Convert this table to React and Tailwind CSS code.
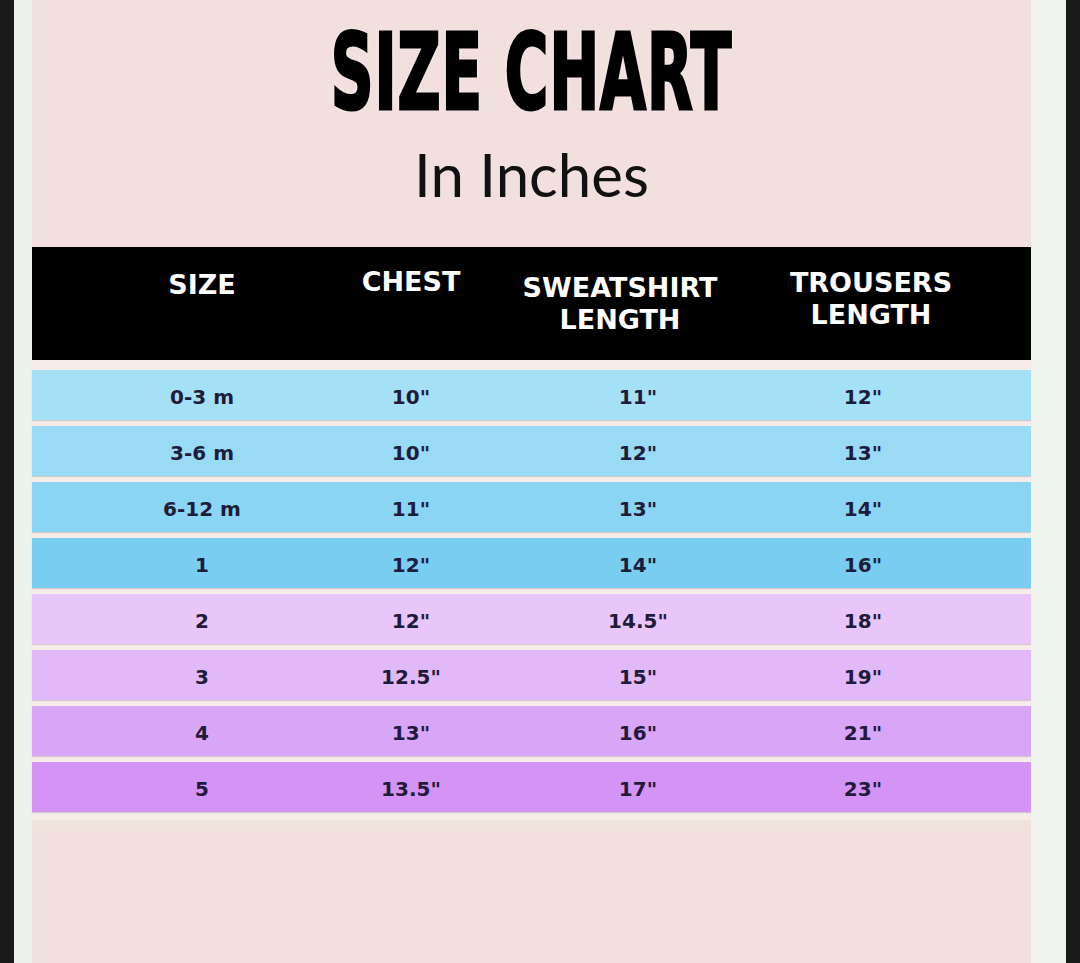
import React from 'react';

const rows = [
  { size: '0-3 m', chest: '10"', shirt: '11"', trousers: '12"', bg: 'bg-[#a5e1f6]' },
  { size: '3-6 m', chest: '10"', shirt: '12"', trousers: '13"', bg: 'bg-[#99dbf5]' },
  { size: '6-12 m', chest: '11"', shirt: '13"', trousers: '14"', bg: 'bg-[#8ad4f4]' },
  { size: '1', chest: '12"', shirt: '14"', trousers: '16"', bg: 'bg-[#78cdf1]' },
  { size: '2', chest: '12"', shirt: '14.5"', trousers: '18"', bg: 'bg-[#e9c6f9]' },
  { size: '3', chest: '12.5"', shirt: '15"', trousers: '19"', bg: 'bg-[#e2b9f8]' },
  { size: '4', chest: '13"', shirt: '16"', trousers: '21"', bg: 'bg-[#d9a5f7]' },
  { size: '5', chest: '13.5"', shirt: '17"', trousers: '23"', bg: 'bg-[#d394f6]' },
];

// header cells: width + top padding so each label sits where it does in the chart
function HeadCell({ width, pad, children }) {
  return (
    <div className={`${width} ${pad} shrink-0 flex justify-center text-center`}>
      <div className="whitespace-nowrap">{children}</div>
    </div>
  );
}

function Cell({ width, children }) {
  return (
    <div className={`${width} shrink-0 flex justify-center whitespace-nowrap`}>{children}</div>
  );
}

export default function App() {
  return (
    <div className="w-[1080px] h-[963px] flex bg-[#1a1a1a] overflow-hidden">
      <div className="w-[14px] shrink-0 bg-[#1a1a1a]" />
      <div className="w-[18px] shrink-0 bg-[#eef2ec]" />

      {/* chart panel */}
      <div className="w-[999px] shrink-0 h-full flex flex-col bg-[#f2e0df]">
        <div className="h-[247px] shrink-0 flex flex-col items-center">
          <div
            className="mt-[34px] h-[80px] leading-[80px] text-[66px] font-bold text-black tracking-[1px] scale-y-[1.58] [font-family:'Liberation_Sans_Narrow','DejaVu_Sans_Condensed',sans-serif] [font-stretch:condensed] [-webkit-text-stroke:2px_black] [text-shadow:0_0_3px_#fff]"
          >
            SIZE CHART
          </div>
          <div className="mt-[30px] h-[60px] leading-none text-[60px] text-[#111] [font-family:Lato,sans-serif]">
            In Inches
          </div>
        </div>

        {/* table head */}
        <div className="h-[113px] shrink-0 bg-black flex items-start text-white text-[27px] leading-[32px] font-bold [font-family:'DejaVu_Sans',sans-serif]">
          <HeadCell width="w-[340px]" pad="pt-[22px]">SIZE</HeadCell>
          <HeadCell width="w-[78px]" pad="pt-[19px]">CHEST</HeadCell>
          <HeadCell width="w-[340px]" pad="pt-[25px]">
            SWEATSHIRT
            <br />
            LENGTH
          </HeadCell>
          <HeadCell width="w-[162px]" pad="pt-[20px]">
            TROUSERS
            <br />
            LENGTH
          </HeadCell>
        </div>

        {/* table body */}
        <div className="shrink-0 bg-[#f6ece8] pt-[10px] pb-[8px] flex flex-col gap-[6px] text-[20px] font-bold text-[#1f1b3b] [font-family:'DejaVu_Sans',sans-serif]">
          {rows.map((r) => (
            <div
              key={r.size}
              className={`h-[50px] flex items-center pt-[4px] ${r.bg} shadow-[0_1px_1px_rgba(120,100,140,0.25)]`}
            >
              <Cell width="w-[340px]">{r.size}</Cell>
              <Cell width="w-[78px]">{r.chest}</Cell>
              <Cell width="w-[376px]">{r.shirt}</Cell>
              <Cell width="w-[74px]">{r.trousers}</Cell>
            </div>
          ))}
        </div>

        <div className="flex-1 bg-[#f2e0df] border-t-[10px] border-[#efe3dc]" />
      </div>

      <div className="w-[35px] shrink-0 bg-[#eff3ee]" />
      <div className="w-[14px] shrink-0 bg-[#1a1a1a]" />
    </div>
  );
}
